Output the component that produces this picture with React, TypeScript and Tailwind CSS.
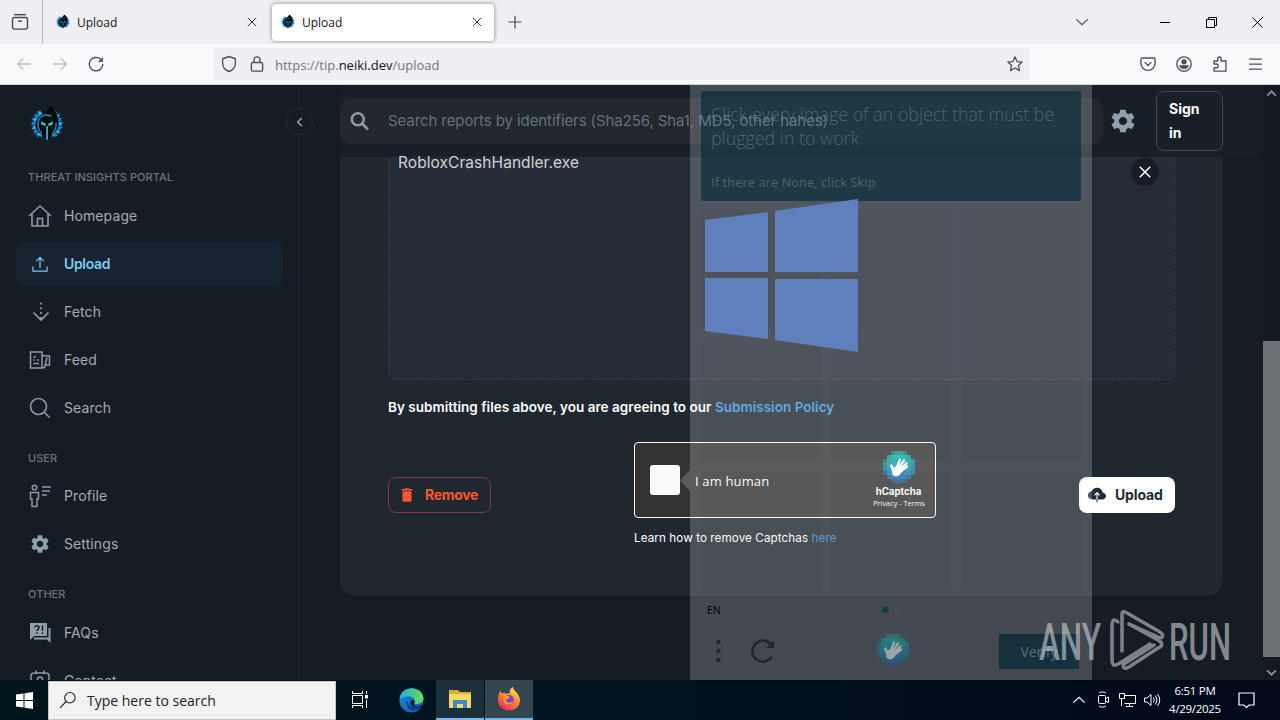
import { ReactNode } from 'react'
import { IoMdSettings } from 'react-icons/io'
import { IoCloudUpload } from 'react-icons/io5'
import { MdDelete, MdSettings } from 'react-icons/md'

const UI_FONT = "font-['Open_Sans','Noto_Sans',sans-serif]"
const PAGE_FONT = "font-['Inter','Roboto',sans-serif]"

interface IconProps {
  className?: string
  size?: number
  stroke?: number
  children: ReactNode
}

/** Stroked icon on a 24x24 grid */
function Icon({ className = '', size = 24, stroke = 1.5, children }: IconProps) {
  return (
    <svg
      width={size}
      height={size}
      viewBox="0 0 24 24"
      fill="none"
      stroke="currentColor"
      strokeWidth={stroke}
      className={`shrink-0 ${className}`}
    >
      {children}
    </svg>
  )
}

/** Hooded warrior logo with a blue ring of spikes */
function NeikiLogo({ size }: { size: number }) {
  const spikes = [34, 52, 70, 88, 106, 124, 142, 218, 236, 254, 272, 290, 308, 326]
  return (
    <svg width={size} height={size} viewBox="0 0 36 36" className="shrink-0">
      {spikes.map((a, i) => (
        <path
          key={a}
          d="M16 8 L17.200 2 L18.200 4.500 L19.600 3 L20 8 Z"
          fill={i % 2 ? '#2aa9ee' : '#1b86d8'}
          transform={`rotate(${a} 18 18)`}
        />
      ))}
      <path d="M21 1 C26 4 29.500 12 29 19 C28 26 23 28 18 32 C13 28 8 26 7 20 C7 12 12 9 17 7Z" fill="#070b10" />
      <path
        d="M9.500 19 C9 11 15 8 22 10.500 M9.500 19 C9.500 23 11 25 13 27 M26.500 17 C27 22 25.500 25 23 27"
        fill="none"
        stroke="#2f7fae"
        strokeWidth="1.500"
      />
      <path d="M12 15.500 L17 17.800 L16.500 20 L13 18.800Z M24 15.500 L19 17.800 L19.500 20 L23 18.800Z" fill="#22d6c8" />
      <path d="M17.300 20 h1.500 v13 h-1.500z" fill="#58b4f0" />
      <path d="M10.500 27 L13.500 28 L12.500 31Z M25.500 27 L22.500 28 L23.500 31Z" fill="#1ba4e0" />
    </svg>
  )
}

function CaptchaLogo({ className = '' }: { className?: string }) {
  const rows = ['..abba..', '.bccccb.', 'accccccb', 'bccccccb', 'bccccccb', 'accccccb', '.bccccb.', '..abba..']
  const colors = ['#10b59c', '#0cb1a4', '#08a6a6', '#0a99aa', '#0d8eb0', '#107cb4', '#126cb6', '#155fac']
  const alpha: Record<string, number> = { a: 0.5, b: 0.75, c: 1 }
  return (
    <svg width="32" height="32" viewBox="0 0 32 32" className={`shrink-0 ${className}`}>
      <g shapeRendering="crispEdges">
        {rows.map((row, y) =>
          row.split('').map((c, x) =>
            c === '.' ? null : (
              <rect key={`${x}-${y}`} x={x * 4} y={y * 4} width="4" height="4" fill={colors[y]} opacity={alpha[c]} />
            ),
          ),
        )}
      </g>
      <path
        d="M13.500 17 L17 8.800 M15 18 L21 9.500 M16 19.500 L23.500 12.300 M17 21 L24 15.500 M10.500 20 L8.300 14.500"
        stroke="#fff"
        strokeWidth="2.300"
        strokeLinecap="round"
      />
      <path d="M9.300 17 L12.500 15.500 L18.500 19.500 L18 22 C16 26 11 26.500 9.300 23Z" fill="#fff" />
    </svg>
  )
}

function Tab({ active = false }: { active?: boolean }) {
  return (
    <div
      className={`flex h-[37px] w-[222px] items-center rounded pl-2 pr-[10px] ${
        active ? 'bg-white shadow-[0_0_4px_rgba(0,0,0,0.45)]' : ''
      }`}
    >
      <NeikiLogo size={16} />
      <span className="ml-[6px] flex-1 pt-[2px] text-[12px] text-[#15141a]">Upload</span>
      <Icon size={14} stroke={1.7} className="text-[#3a3942]">
        <path d="M5 5 L19 19 M19 5 L5 19" />
      </Icon>
    </div>
  )
}

function TabBar() {
  return (
    <div className="flex h-11 items-center bg-[#eeeef3] text-[#4a4953]">
      <div className="flex h-full w-[43px] items-center justify-center border-r border-[#b5b5bd]">
        <Icon size={20} stroke={1.7} className="-ml-[2px]">
          <path d="M5 3.200 H19" />
          <rect x="3" y="6.500" width="18" height="14" rx="2.500" />
          <path d="M9.500 11 H14.500" />
        </Icon>
      </div>
      <div className="ml-1">
        <Tab />
      </div>
      <div className="ml-[3px]">
        <Tab active />
      </div>
      <Icon size={18} stroke={1.6} className="ml-3">
        <path d="M12 3.500 V20.500 M3.500 12 H20.500" />
      </Icon>
      <div className="flex-1" />
      <Icon size={16} stroke={1.7} className="mr-[70px]">
        <path d="M3.500 8 L12 16 L20.500 8" />
      </Icon>
      <div className="flex items-center gap-[35px] pr-[17px] text-black">
        <svg width="11" height="11" className="overflow-visible">
          <path d="M0 5.500 H10" stroke="currentColor" />
        </svg>
        <svg width="11" height="11" fill="none" stroke="currentColor">
          <path d="M0.500 2.500 h8 v8 h-8z M2.500 2.500 v-2 h8 v8 h-2" />
        </svg>
        <svg width="11" height="11" fill="none" stroke="currentColor">
          <path d="M0.500 0.500 L10.500 10.500 M10.500 0.500 L0.500 10.500" />
        </svg>
      </div>
    </div>
  )
}

function NavBar() {
  return (
    <div className="flex h-[41px] items-center border-b border-[#cfd3d5] bg-[#f9f9fc] text-[#4f4e58]">
      <div className="flex w-[214px] items-center gap-[18px] pl-[15px]">
        <Icon size={18} stroke={1.7} className="text-[#bdbdc4]">
          <path d="M21 12 H4 M11 4.500 L3.500 12 L11 19.500" />
        </Icon>
        <Icon size={18} stroke={1.7} className="text-[#bdbdc4]">
          <path d="M3 12 H20 M13 4.500 L20.500 12 L13 19.500" />
        </Icon>
        <Icon size={18} stroke={1.8}>
          <path d="M21 12 A9 9 0 1 1 18 5.500" />
          <path d="M21 3 V9 H15Z" fill="currentColor" strokeWidth="0.500" />
        </Icon>
      </div>
      <div className="flex h-8 w-[816px] items-center bg-[#eeeef3] pl-[6px] pr-[6px]">
        <Icon size={18} stroke={1.8}>
          <path d="M12 2 L20.500 5 V10.500 C20.500 16 17 20 12 22 C7 20 3.500 16 3.500 10.500 V5 Z" strokeLinejoin="round" />
        </Icon>
        <Icon size={18} stroke={1.8} className="ml-[10px]">
          <rect x="4.500" y="10" width="15" height="11.500" rx="2" />
          <path d="M8 10 V6.500 A4 4 0 0 1 16 6.500 V10" />
        </Icon>
        <div className="ml-[9px] flex-1 pt-[3px] text-[13px] text-[#76757e]">
          https://tip.<span className="text-[#15141a]">neiki.dev</span>/upload
        </div>
        <Icon size={18} stroke={1.7}>
          <path
            d="M12 2.500 L14.800 8.700 L21.500 9.400 L16.500 14 L18 20.800 L12 17.300 L6 20.800 L7.500 14 L2.500 9.400 L9.200 8.700 Z"
            strokeLinejoin="round"
          />
        </Icon>
      </div>
      <div className="flex flex-1 items-center justify-end gap-[18px] pr-4">
        <Icon size={18} stroke={1.8}>
          <path d="M4.500 4 H19.500 A2 2 0 0 1 21.500 6 V11 A9.500 9.500 0 0 1 2.500 11 V6 A2 2 0 0 1 4.500 4Z" />
          <path d="M7.500 9.500 L12 14 L16.500 9.500" />
        </Icon>
        <Icon size={18} stroke={1.8}>
          <circle cx="12" cy="12" r="9.600" />
          <circle cx="12" cy="9" r="2.600" fill="currentColor" />
          <path d="M6.500 14.500 H17.500 C16 19 8 19 6.500 14.500Z" fill="currentColor" />
        </Icon>
        <Icon size={18} stroke={1.8}>
          <path
            d="M4 8 H9 V5 A2.300 2.300 0 0 1 13.600 5 V8 H20 V21.500 H4 V17 H7 A2.300 2.300 0 0 0 7 12 H4Z"
            strokeLinejoin="round"
          />
        </Icon>
        <Icon size={17} stroke={1.7}>
          <path d="M3 4.500 H21 M3 11.500 H21 M3 18.500 H21" />
        </Icon>
      </div>
    </div>
  )
}

interface NavItemProps {
  label: string
  active?: boolean
  children: ReactNode
}

function NavItem({ label, active = false, children }: NavItemProps) {
  return (
    <div className="flex h-12 items-center">
      <div
        className={`flex h-11 w-[267px] items-center gap-3 rounded-lg pb-px pl-3 ${
          active ? 'bg-[#152430] text-[#7cc8f2]' : 'text-[#8f9aa5]'
        }`}
      >
        <div className="flex size-6 items-center justify-center">{children}</div>
        <span
          className={`text-[14px] ${active ? 'font-semibold tracking-[-0.350px]' : 'tracking-[0.100px] text-[#a5acb3]'}`}
        >
          {label}
        </span>
      </div>
    </div>
  )
}

function NavLabel({ className = '', children }: { className?: string; children: ReactNode }) {
  return (
    <div className={`flex h-[30px] items-center pl-3 text-[11px] font-medium tracking-[0.050px] text-[#6b7681] ${className}`}>
      {children}
    </div>
  )
}

function Sidebar() {
  return (
    <div className="relative w-[300px] shrink-0 border-r border-[#20262f] pl-4">
      <div className="flex h-[77px] items-center pl-3">
        <NeikiLogo size={38} />
      </div>
      <div className="absolute -right-[14px] top-[23px] flex size-[27px] items-center justify-center rounded-full border border-[#272d35] bg-[#161c24] text-[#9aa3ac]">
        <Icon size={14} stroke={2.5}>
          <path d="M15 5 L8 12 L15 19" />
        </Icon>
      </div>

      <NavLabel>THREAT INSIGHTS PORTAL</NavLabel>
      <NavItem label="Homepage">
        <Icon stroke={1.6}>
          <path d="M1 12 L12 2 L23 12 M4 10 V22 H20 V10 M9.500 22 V14.500 H14.500 V22" />
        </Icon>
      </NavItem>
      <NavItem label="Upload" active>
        <Icon size={20}>
          <path d="M3.500 15 V20.500 H20.500 V15 M12 17 V4 M7.500 8.500 L12 4 L16.500 8.500" />
        </Icon>
      </NavItem>
      <NavItem label="Fetch">
        <Icon className="translate-x-px" stroke={1.700}>
          <path d="M4.500 12.500 L12 20 L19.500 12.500" />
          <path d="M12 2.500 V19" strokeDasharray="2 2.800" />
        </Icon>
      </NavItem>
      <NavItem label="Feed">
        <Icon>
          <path d="M2.500 4 H14 V20 H2.500Z M14 7.500 L21.500 8 V17 H18 M14 20 L16.500 19.500 L19 9.500 M5.500 9 H8 M5.500 12 H7 M9 12 H11 M5.500 15.500 H11" />
        </Icon>
      </NavItem>
      <NavItem label="Search">
        <Icon stroke={1.600}>
          <circle cx="10.500" cy="10.500" r="8" />
          <path d="M16.500 16.500 L21.500 21.500" />
        </Icon>
      </NavItem>

      <NavLabel className="mt-[10px] pt-[2px]">USER</NavLabel>
      <NavItem label="Profile">
        <Icon>
          <circle cx="6.500" cy="3.500" r="2.300" />
          <path d="M2.500 15 V8.500 H10.500 V15 H9 V22.500 H4 V15Z M14 3 H23 M14 7 H22 M14 11 H19" />
        </Icon>
      </NavItem>
      <NavItem label="Settings">
        <MdSettings size={22} className="text-[#919eab]" />
      </NavItem>

      <NavLabel className="mt-[11px]">OTHER</NavLabel>
      <NavItem label="FAQs">
        <svg width="24" height="24" viewBox="0 0 24 24" fill="#919eab">
          <path d="M2 2 H19 V15 H6 L2 19Z" />
          <path d="M20.500 7 H22.500 V22 L19 18.500 H6 V16.500 H20.500Z" />
          <g fill="none" stroke="#161c24" strokeWidth="1.500">
            <path d="M7 6.500 C7 4 11 4 11 6.500 C11 8.200 9 8 9 10 M9 11.200 V12.700 M14.500 4.500 V10 M14.500 11.200 V12.700" />
          </g>
        </svg>
      </NavItem>
      <NavItem label="Contact">
        <Icon>
          <rect x="3" y="4" width="18" height="17" rx="3" />
          <path d="M8 1.500 V5 M16 1.500 V5" />
          <circle cx="12" cy="10.500" r="2.500" />
          <path d="M7.500 18 C8 14 16 14 16.500 18" />
        </Icon>
      </NavItem>
    </div>
  )
}

function Header() {
  return (
    <div className="flex h-[72px] shrink-0 items-center bg-[#171f27]">
      <div className="flex h-[46px] w-[763px] items-center rounded-xl bg-[#23282f] pl-[7px]">
        <Icon stroke={2.500} className="text-[#919ba5]">
          <circle cx="10.800" cy="10.300" r="6" />
          <path d="M15.500 15 L21 20.500" />
        </Icon>
        {/* stays legible above the challenge popup */}
        <span className="relative z-10 ml-[17px] pt-px text-[15px] tracking-[-0.090px] text-[#86a0ab]/65">
          Search reports by identifiers (Sha256, Sha1, MD5, other hahes)
        </span>
      </div>
      <IoMdSettings size={28} className="ml-[6px] text-[#919eab]" />
      <button className="ml-[19px] h-[60px] w-[67px] rounded-lg border border-[#3f474f] pl-3 text-left text-[14px] font-bold leading-6 text-white">
        Sign
        <br />
        in
      </button>
    </div>
  )
}

function CaptchaWidget() {
  return (
    <div>
      <div className="flex h-[76px] w-[302px] items-center rounded border border-white bg-[#333333] pl-[15px] pr-[9px] text-white">
        <div className="size-[30px] rounded-[3px] bg-[#fafafa]" />
        <span className={`ml-[15px] flex-1 pt-[3px] text-[13px] tracking-[0.150px] ${UI_FONT}`}>I am human</span>
        <div className="flex w-[54px] flex-col items-center pb-[1px]">
          <CaptchaLogo className="-ml-px" />
          <span className="-ml-px mt-[2px] text-[9.700px] font-bold leading-[13px]">hCaptcha</span>
          <span className={`whitespace-nowrap text-[7.300px] leading-[11px] ${UI_FONT}`}>Privacy - Terms</span>
        </div>
      </div>
      <p className="mt-[11px] text-[11.700px] leading-[18px] tracking-[0.070px] text-white">
        Learn how to remove Captchas <span className="text-[#2d84c4]">here</span>
      </p>
    </div>
  )
}

function UploadCard() {
  return (
    <div className="h-[439px] w-[883px] shrink-0 rounded-b-2xl bg-[#1f272f] px-12">
      <div className="flex h-[223px] justify-between rounded-b-lg border border-t-0 border-dashed border-[#353d47] bg-[#252c37]">
        <span className="ml-[9px] -mt-[6px] text-[15.500px] tracking-[0.060px] text-[#cfd3d7]">RobloxCrashHandler.exe</span>
        <button className="mr-[15px] mt-px flex size-7 items-center justify-center rounded-full bg-[#171d25] text-white">
          <Icon size={18} stroke={2}>
            <path d="M5 5 L19 19 M19 5 L5 19" />
          </Icon>
        </button>
      </div>
      <p className="mt-4 text-[13.500px] font-semibold leading-[22px] tracking-[0.030px] text-white">
        By submitting files above, you are agreeing to our <span className="text-[#3d9be6]">Submission Policy</span>
      </p>
      <div className="mt-6 flex items-center justify-between">
        <button className="flex h-9 w-[103px] items-center rounded-lg border border-[#84393c] pl-[9px] text-[14px] font-bold tracking-[-0.300px] text-[#ff5630]">
          <MdDelete size={18} />
          <span className="ml-[9px]">Remove</span>
        </button>
        <CaptchaWidget />
        <button className="flex h-9 w-24 items-center rounded-lg bg-white pl-[9px] text-[14px] font-bold tracking-[-0.150px] text-[#212b36]">
          <IoCloudUpload size={18} />
          <span className="ml-[9px]">Upload</span>
        </button>
      </div>
    </div>
  )
}

/** Half-transparent challenge popup that is fading in over the page */
function ChallengePopup() {
  return (
    <div className={`absolute left-[690px] top-0 h-[595px] w-[402px] bg-white/20 px-[11px] pt-[6px] ${UI_FONT}`}>
      <div className="h-[110px] rounded-[2px] bg-[#0c303c]/75 px-[10px] pt-[11px] text-[#50646c]">
        <p className="whitespace-nowrap text-[17.800px] font-light leading-6 tracking-[0.040px]">
          Click every image of an object that must be
          <br />
          plugged in to work
        </p>
        <p className="mt-[21px] text-[12.500px] leading-6 tracking-[0.220px]">If there are None, click Skip</p>
      </div>
      <div className="mt-[10px] grid grid-cols-3 gap-[10px]">
        {Array.from({ length: 9 }, (_, i) => (
          <div key={i} className="h-[120px] bg-black/[0.025]" />
        ))}
      </div>
      <div className="mt-[8px] flex h-5 items-center pl-[6px] text-[10.500px] text-black">
        <span className="w-[175px] pt-[3px]">EN</span>
        <span className="size-[7px] rounded-full bg-[#12404a]" />
        <span className="ml-[5px] size-[5px] rounded-full bg-[#484f56]" />
      </div>
      <div className="mt-[6px] flex h-[52px] items-center">
        <svg width="35" height="24" viewBox="0 0 35 24" fill="#22272e">
          <circle cx="17.500" cy="3" r="2.200" />
          <circle cx="17.500" cy="12" r="2.200" />
          <circle cx="17.500" cy="21" r="2.200" />
        </svg>
        <Icon size={28} stroke={2.300} className="ml-[13px] text-[#22272e]">
          <path d="M19.500 17 A9 9 0 1 1 18.500 6" />
          <path d="M21.500 3 V9.500 H15Z" fill="currentColor" strokeWidth="0" />
        </Icon>
        <CaptchaLogo className="-mt-[2px] ml-[100px] opacity-50" />
        <div className="ml-auto mr-[2px] mt-[1px] h-[35px] w-20 bg-[#0a2c38]/80 text-center text-[14px] leading-[35px] text-[#5d7177]">
          Verify
        </div>
      </div>
      <svg className="absolute -left-[10px] top-[385px]" width="10" height="21">
        <path d="M10 0 V21 L0 10.500Z" fill="#fff" fillOpacity="0.200" />
      </svg>
      <svg className="absolute left-[15px] top-[114px]" width="153" height="153" fill="#6080bd">
        <path d="M0 21 L63 13 V73 H0Z M70 12 L153 0 V73 H70Z M0 79 H63 V140 L0 132Z M70 80 H153 V153 L70 141Z" />
      </svg>
    </div>
  )
}

function Watermark() {
  return (
    <svg
      className="absolute left-[1036px] top-[522px] opacity-60"
      width="198"
      height="68"
      fill="#cfd2d6"
      fontFamily="Roboto, sans-serif"
      fontSize="52"
      fontWeight="500"
    >
      <text x="3" y="53" textLength="62" lengthAdjust="spacingAndGlyphs">
        ANY
      </text>
      <text x="133" y="53" textLength="62" lengthAdjust="spacingAndGlyphs">
        RUN
      </text>
      <g fill="none" stroke="#c3c6ca" strokeWidth="3.500" strokeLinejoin="round" strokeLinecap="round">
        <path d="M82 15 C77 11 76 14 76 18 V52 C76 60 79 59 84 56 L114 37" />
        <path d="M86 44 V8 C86 4 88 4 91 6 L124 25 C129 29 126 32 122 30 L93 17" />
        <path d="M93 17 L122 33 C127 36 127 39 122 41 L93 60 C88 63 86 60 88 57 L118 38" />
      </g>
    </svg>
  )
}

function Scrollbar() {
  return (
    <div className="flex w-[17px] flex-col items-center bg-[#141a21] text-[#858b92]">
      <Icon size={13} stroke={3.500} className="mt-[2px]">
        <path d="M4 16 L12 8 L20 16" />
      </Icon>
      <div className="mt-[241px] h-[316px] w-full bg-[#6d7175]" />
      <Icon size={13} stroke={3.500} className="mt-[9px]">
        <path d="M4 8 L12 16 L20 8" />
      </Icon>
    </div>
  )
}

function Taskbar() {
  return (
    <div className={`flex h-10 items-center bg-gradient-to-r from-[#01151c] via-[#011320] to-[#01081a] text-white ${UI_FONT}`}>
      <div className="flex w-12 justify-center">
        <svg width="17" height="17" fill="#fff">
          <path d="M0 2.500 L7.500 1.500 V8 H0Z M8.500 1.300 L17 0 V8 H8.500Z M0 9 H7.500 V15.500 L0 14.500Z M8.500 9 H17 V17 L8.500 15.700Z" />
        </svg>
      </div>
      <div className="flex h-[39px] w-[288px] items-center border border-[#c5c5c5] bg-[#f2f2f2] pl-[10px] text-[#222]">
        <Icon size={18} stroke={1.500}>
          <circle cx="14.500" cy="9" r="7" />
          <path d="M9.500 14 L1.500 22.500" />
        </Icon>
        <span className="ml-[10px] text-[14px]">Type here to search</span>
      </div>
      <div className="flex w-12 justify-center">
        <svg width="18" height="18" fill="none" stroke="#fff">
          <path d="M1.500 0 V2.500 H11.500 V0 M1.500 17 V14.500 H11.500 V17 M1.500 4.500 H11.500 V12.500 H1.500Z M15.500 0 V3 M15.500 9 V17" />
          <rect x="14.500" y="4.500" width="2" height="2.500" fill="#fff" />
        </svg>
      </div>
      <div className="flex w-[52px] justify-center pl-[2px]">
        <svg width="25" height="25" viewBox="0 0 24 24">
          <defs>
            <linearGradient id="edgeTop" x1="0" x2="1">
              <stop offset="0" stopColor="#1fa8e8" />
              <stop offset="1" stopColor="#66e04f" />
            </linearGradient>
            <linearGradient id="edgeBody" x1="0" x2="1" y1="0" y2="1">
              <stop offset="0" stopColor="#1790dc" />
              <stop offset="1" stopColor="#1550a5" />
            </linearGradient>
          </defs>
          <circle cx="12" cy="12" r="11.500" fill="url(#edgeBody)" />
          <path d="M0.500 11 C1 -3.500 23 -3 23.500 10 C23.500 14 19 16 14.500 15 C16.500 12 14 8 9.500 8 C5 8 1.500 10.500 0.500 11Z" fill="url(#edgeTop)" />
          <path d="M8.500 12 C8 17 13 20.500 21 18 C17 24 9 21 7.500 17 C6.500 14 7.500 12.500 8.500 12Z" fill="#123f86" />
          <path d="M14.500 15 C13 17.500 18 19.500 23.500 15.500 L21.800 18 C17 20 11 18 11 14 C11 12.500 12 11.500 14.500 11.500 C15.300 13 15 14 14.500 15Z" fill="#04151f" />
        </svg>
      </div>
      <div className="flex h-full w-12 items-center justify-center border-b-2 border-[#76b9ed] bg-[#1a303a]">
        <svg width="22" height="20">
          <path d="M0 1 H9 L11 3 H22 V19 H0Z" fill="#e5a62f" />
          <path d="M0 5 H22 V19 H0Z" fill="#fbd768" />
          <path d="M4 19 V11 H18 V19 H14 V15 H8 V19Z" fill="#3a8dcc" />
        </svg>
      </div>
      <div className="ml-px flex h-full w-12 items-center justify-center border-b-2 border-[#76b9ed] bg-[#344751]">
        <svg width="24" height="24" viewBox="0 0 24 24">
          <defs>
            <linearGradient id="fox" x1="0.800" x2="0.200" y1="0" y2="1">
              <stop offset="0" stopColor="#fff04a" />
              <stop offset="0.450" stopColor="#ff8a2a" />
              <stop offset="1" stopColor="#f5245e" />
            </linearGradient>
          </defs>
          <path d="M1 13 C1 8 2 6 3.500 4 L5 6.500 L7.500 5.500 L9 7 C10 6 12 6 13 6.500 C12 3 14 1 16 0 C16 4 22.500 6 23 13 C23 19.500 18 23.500 12 23.500 C6 23.500 1 19 1 13Z" fill="url(#fox)" />
          <circle cx="12" cy="13" r="5" fill="#7b44d6" />
          <path d="M5 8 C8 7 10 9 13 10 C12 12 10 11.500 9 13 C9 16 14 17 17 13 C16 19 7 19 6 13Z" fill="#ff9a2b" />
        </svg>
      </div>
      <div className="flex-1" />
      <div className="flex items-center gap-2">
        <Icon size={16} stroke={1.700}>
          <path d="M3.500 16 L12 8 L20.500 16" />
        </Icon>
        <svg width="16" height="18" fill="none" stroke="#fff">
          <rect x="3.500" y="4.500" width="7" height="8" rx="1" />
          <path d="M10.500 7.500 L13.500 6 V11.500 L10.500 10 M4 2 C6 0.500 9 0.500 11 2 M4 15 C6 16.500 9 16.500 11 15" />
        </svg>
        <svg width="17" height="16" fill="none" stroke="#fff">
          <path d="M5.500 3.500 H16.500 V11.500 H5.500 M10.500 11.500 V14.500 M7 14.500 H14 M0.500 1.500 H5.500 V6.500 H0.500Z M2.500 6.500 V14" />
        </svg>
        <svg width="18" height="16" fill="none" stroke="#fff">
          <path d="M0.500 6 H3 L7 2.500 V13.500 L3 10 H0.500Z M9.500 5.500 Q11 8 9.500 10.500 M11.500 3.500 Q14.500 8 11.500 12.500 M13.500 2 Q18 8 13.500 14" />
        </svg>
      </div>
      <div className="w-[66px] text-center text-[11.500px] leading-[18px] tracking-[-0.300px]">
        6:51 PM
        <br />
        4/29/2025
      </div>
      <svg width="17" height="17" className="ml-[10px] mr-[25px]" fill="none" stroke="#fff" strokeWidth="1.200">
        <path d="M1 1 H16 V13 H11 L8.500 15.500 L6 13 H1Z" />
      </svg>
    </div>
  )
}

export default function App() {
  return (
    <div className={`flex h-[720px] w-[1280px] flex-col overflow-hidden bg-[#161c24] ${UI_FONT}`}>
      <TabBar />
      <NavBar />
      <div className={`relative flex h-[595px] shrink-0 overflow-hidden ${PAGE_FONT}`}>
        <Sidebar />
        <div className="flex flex-1 flex-col pl-10">
          <Header />
          <UploadCard />
        </div>
        <Scrollbar />
        <ChallengePopup />
        <Watermark />
      </div>
      <Taskbar />
    </div>
  )
}
